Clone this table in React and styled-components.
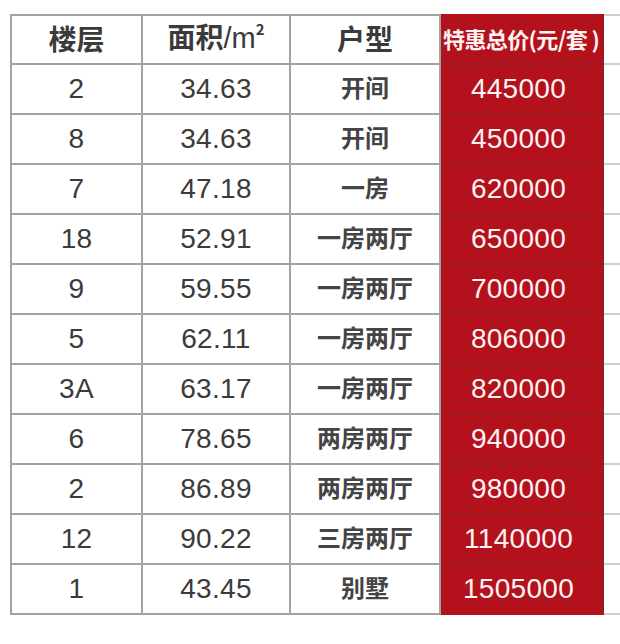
import React from 'react';
import styled, { createGlobalStyle } from 'styled-components';

const GlobalStyle = createGlobalStyle`
  html, body {
    margin: 0;
    padding: 0;
    background: #ffffff;
    overflow: hidden;
  }
  body {
    font-family: "Liberation Sans", "Noto Sans CJK SC", Arial, sans-serif;
  }
`;

const Page = styled.div`
  width: 620px;
  height: 644px;
  overflow: hidden;
  padding: 14px 0 0 10px;
  box-sizing: border-box;
`;

const Table = styled.table`
  border-collapse: collapse;
  table-layout: fixed;
  width: 632px;
  color: #3b3b3b;
`;

const Col = styled.col`
  width: ${(p) => p.$w}px;
`;

const Row = styled.tr`
  height: ${(p) => (p.$head ? 49 : 50)}px;
`;

const Cell = styled.td`
  border: 2px solid #a3a3a3;
  padding: 0 0 ${(p) => (p.$cjk ? 5 : 0)}px;
  text-align: center;
  vertical-align: middle;
  white-space: nowrap;
  line-height: 1;
  font-family: ${(p) =>
    p.$cjk
      ? '"Noto Sans CJK SC", "Liberation Sans", sans-serif'
      : '"Liberation Sans", "Noto Sans CJK SC", sans-serif'};
  font-size: ${(p) => (p.$cjk ? 24 : 28)}px;
  font-weight: ${(p) => (p.$cjk ? 700 : 400)};
  color: ${(p) => (p.$cjk ? '#444' : '#3b3b3b')};
  letter-spacing: ${(p) => (p.$cjk ? '0' : '0.3px')};
`;

const HeadCell = styled.th`
  border: 2px solid #a3a3a3;
  padding: 0 0 4px;
  text-align: center;
  vertical-align: middle;
  white-space: nowrap;
  line-height: 1;
  font-family: "Noto Sans CJK SC", "Liberation Sans", sans-serif;
  font-size: 28px;
  font-weight: 700;
  color: #3a3a3a;
`;

const Unit = styled.span`
  font-family: "Liberation Sans", sans-serif;
  font-weight: 400;
  font-size: 29px;
`;

const Sup = styled.sup`
  font-size: 15px;
  vertical-align: 13px;
  line-height: 0;
`;

const PriceHead = styled.th`
  border: 2px solid #9a1a22;
  border-top-color: #b3121d;
  padding: 0 0 4px 2px;
  background: #b3121d;
  color: #fff4f4;
  text-align: left;
  vertical-align: middle;
  white-space: nowrap;
  line-height: 1;
  font-family: "Noto Sans CJK SC", "Liberation Sans", sans-serif;
  font-size: 22px;
  font-weight: 700;
  letter-spacing: -0.6px;
`;

const PriceCell = styled.td`
  border: 2px solid #9a1a22;
  border-bottom-color: ${(p) => (p.$last ? '#b3121d' : '#9a1a22')};
  padding: 0 6px 0 0;
  background: #b3121d;
  color: #fff2f2;
  text-align: center;
  vertical-align: middle;
  line-height: 1;
  font-family: "Liberation Sans", sans-serif;
  font-size: 28px;
  letter-spacing: 0.3px;
`;

const Spare = styled.td`
  border: 2px solid #cfcfcf;
  border-left: none;
  border-right: none;
`;

const rows = [
  ['2', '34.63', '开间', '445000'],
  ['8', '34.63', '开间', '450000'],
  ['7', '47.18', '一房', '620000'],
  ['18', '52.91', '一房两厅', '650000'],
  ['9', '59.55', '一房两厅', '700000'],
  ['5', '62.11', '一房两厅', '806000'],
  ['3A', '63.17', '一房两厅', '820000'],
  ['6', '78.65', '两房两厅', '940000'],
  ['2', '86.89', '两房两厅', '980000'],
  ['12', '90.22', '三房两厅', '1140000'],
  ['1', '43.45', '别墅', '1505000'],
];

export default function App() {
  return (
    <Page>
      <GlobalStyle />
      <Table>
        <colgroup>
          <Col $w={131} />
          <Col $w={148} />
          <Col $w={150} />
          <Col $w={163} />
          <Col $w={40} />
        </colgroup>
        <thead>
          <Row $head>
            <HeadCell>楼层</HeadCell>
            <HeadCell>
              面积<Unit>/m</Unit>
              <Sup>2</Sup>
            </HeadCell>
            <HeadCell>户型</HeadCell>
            <PriceHead>特惠总价(元/套 )</PriceHead>
            <Spare />
          </Row>
        </thead>
        <tbody>
          {rows.map(([floor, area, type, price], i) => (
            <Row key={i}>
              <Cell>{floor}</Cell>
              <Cell>{area}</Cell>
              <Cell $cjk>{type}</Cell>
              <PriceCell $last={i === rows.length - 1}>{price}</PriceCell>
              <Spare />
            </Row>
          ))}
        </tbody>
      </Table>
    </Page>
  );
}
